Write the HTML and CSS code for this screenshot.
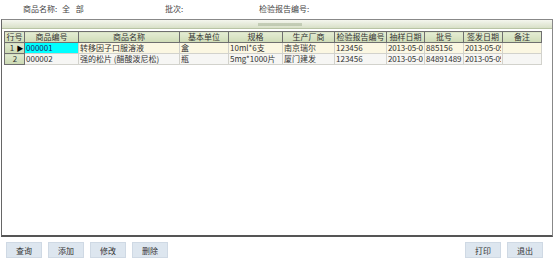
FILE: index.html
```html
<!DOCTYPE html>
<html>

<head>
    <title>药品检验报告</title>
    <link rel="stylesheet" href="styles.css">
</head>

<body>
    <div class="filters">
        <span class="filter name">商品名称: <b>全 部</b></span>
        <span class="filter batch">批次:</span>
        <span class="filter report">检验报告编号:</span>
    </div>

    <div class="panel">
        <div class="panel-bar"><span class="grip"></span></div>
        <div class="grid-wrap">
            <table class="grid">
                <colgroup>
                    <col style="width:20px">
                    <col style="width:54px">
                    <col style="width:101px">
                    <col style="width:49px">
                    <col style="width:54px">
                    <col style="width:52px">
                    <col style="width:52px">
                    <col style="width:38px">
                    <col style="width:39px">
                    <col style="width:39px">
                    <col style="width:39px">
                </colgroup>
                <thead>
                    <tr>
                        <th>行号</th>
                        <th>商品编号</th>
                        <th>商品名称</th>
                        <th>基本单位</th>
                        <th>规格</th>
                        <th>生产厂商</th>
                        <th>检验报告编号</th>
                        <th>抽样日期</th>
                        <th>批号</th>
                        <th>签发日期</th>
                        <th>备注</th>
                    </tr>
                </thead>
                <tbody>
                    <tr class="current">
                        <td class="rownum">1 <span class="marker">&#9654;</span></td>
                        <td class="focus">000001</td>
                        <td>转移因子口服溶液</td>
                        <td>盒</td>
                        <td>10ml*6支</td>
                        <td>南京瑞尔</td>
                        <td>123456</td>
                        <td><span class="clip">2013-05-09</span></td>
                        <td>885156</td>
                        <td><span class="clip">2013-05-09</span></td>
                        <td></td>
                    </tr>
                    <tr>
                        <td class="rownum center">2</td>
                        <td>000002</td>
                        <td>强的松片 (醋酸泼尼松)</td>
                        <td>瓶</td>
                        <td>5mg*1000片</td>
                        <td>厦门建发</td>
                        <td>123456</td>
                        <td><span class="clip">2013-05-09</span></td>
                        <td>84891489</td>
                        <td><span class="clip">2013-05-09</span></td>
                        <td></td>
                    </tr>
                </tbody>
            </table>
        </div>
    </div>

    <div class="actions">
        <div class="group">
            <button>查询</button>
            <button>添加</button>
            <button>修改</button>
            <button>删除</button>
        </div>
        <div class="group">
            <button>打印</button>
            <button>退出</button>
        </div>
    </div>
</body>

</html>
```

FILE: styles.css
```css
body {
    margin: 0;
    width: 554px;
    height: 264px;
    background: #fff;
    color: #333;
    font-family: "Noto Sans CJK SC", "DejaVu Sans", sans-serif;
    font-size: 8px;
    overflow: hidden;
}

.filters {
    display: flex;
    height: 19px;
    align-items: center;
    padding-bottom: 3px;
    box-sizing: border-box;
}

.filter {
    color: #444;
}

.filter b {
    font-weight: normal;
    margin-left: 3px;
    letter-spacing: 2px;
}

.name {
    margin-left: 23px;
    width: 142px;
}

.batch {
    width: 94px;
}

.panel {
    margin: 0 1px;
    height: 218px;
    border: 1px solid #888;
    border-bottom: 2px solid #555;
    border-left-color: #666;
    box-sizing: border-box;
    display: flex;
    flex-direction: column;
}

.panel-bar {
    height: 8px;
    background: linear-gradient(#f4f6ee, #d8e0c8);
    border-bottom: 1px solid #b8c4a4;
    display: flex;
    justify-content: center;
    align-items: center;
}

.grip {
    width: 44px;
    height: 3px;
    margin-left: 6px;
    background-image: radial-gradient(#9aa88a 0.6px, transparent 0.8px);
    background-size: 2px 2px;
}

.grid-wrap {
    padding: 2px 0 0 2px;
}

.grid {
    table-layout: fixed;
    border-collapse: collapse;
    width: 537px;
}

.grid th,
.grid td {
    height: 10px;
    padding: 0 1px;
    line-height: 10px;
    white-space: nowrap;
    overflow: hidden;
    border: 1px solid #b8b8b8;
    font-weight: normal;
    text-align: left;
}

.grid th {
    text-align: center;
    background: linear-gradient(#e4ecd4, #cfdcb6);
    border: 1px solid #6f6f6f;
    color: #333;
}

.grid td {
    border-color: #d2d2cc;
}

.clip {
    display: block;
    overflow: hidden;
    letter-spacing: -0.2px;
}

.grid tr.current td {
    background: #fbf7e2;
}

.grid tbody tr:not(.current) td {
    background: #f6f6f4;
}

.grid td.rownum,
.grid tr.current td.rownum,
.grid tbody tr td.rownum {
    background: linear-gradient(#e0ead0, #cbd8b2);
    border-color: #6f6f6f;
    text-align: right;
    padding-right: 0;
}

.grid td.center,
.grid tbody tr td.center {
    text-align: center;
}

.marker {
    font-size: 7px;
    color: #000;
    display: inline-block;
    width: 8px;
    text-align: center;
}

.grid tr.current td.focus {
    background: #00ffff;
    color: #1a2a6a;
}

.actions {
    display: flex;
    justify-content: space-between;
    padding: 5px 11px 0 6px;
}

.group {
    display: flex;
    gap: 6px;
}

.actions button {
    width: 36px;
    height: 16px;
    padding: 0;
    border: 1px solid #cfd9e4;
    background: #dde6ef;
    color: #333;
    font-family: inherit;
    font-size: 8px;
}
```
